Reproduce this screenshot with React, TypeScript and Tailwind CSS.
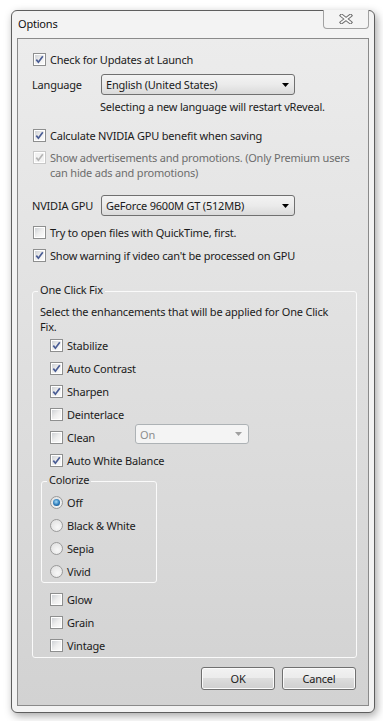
import React from "react";

function Check({ checked = false, disabled = false }: { checked?: boolean; disabled?: boolean }) {
  return (
    <span
      className={`relative flex h-[13px] w-[13px] shrink-0 items-center justify-center border bg-white ${
        disabled ? "border-[#c8c8c8]" : "border-[#8e8f8f]"
      }`}
    >
      <span
        className={`absolute inset-[1px] ${
          disabled
            ? "bg-[#f2f2f2]"
            : "bg-gradient-to-br from-[#cfd2d6] via-[#eeeeee] to-[#fbfbfb]"
        }`}
      />
      {checked && (
        <svg className="relative" width="9" height="9" viewBox="0 0 9 9">
          <path
            d="M1.3 4.6 L3.4 7.2 L7.8 1.2"
            fill="none"
            stroke={disabled ? "#b4b4b4" : "#4a5d95"}
            strokeWidth="1.7"
          />
        </svg>
      )}
    </span>
  );
}

function Radio({ on = false }: { on?: boolean }) {
  return (
    <span className="flex h-[13px] w-[13px] shrink-0 items-center justify-center rounded-full border border-[#9a9a9a] bg-[radial-gradient(circle_at_60%_65%,#f8f8f8,#dcdcdc)]">
      {on && (
        <span className="h-[7px] w-[7px] rounded-full bg-[radial-gradient(circle_at_45%_40%,#a7dcf8,#2a79b8_55%,#0f3d6c)]" />
      )}
    </span>
  );
}

function CheckRow({
  label,
  checked = false,
  disabled = false,
  className = "",
}: {
  label: string;
  checked?: boolean;
  disabled?: boolean;
  className?: string;
}) {
  return (
    <div className={`flex h-[16px] items-center gap-[4px] whitespace-nowrap ${className}`}>
      <Check checked={checked} disabled={disabled} />
      <span className={disabled ? "text-[#6d6d6d]" : ""}>{label}</span>
    </div>
  );
}

function RadioRow({ label, on = false, className = "" }: { label: string; on?: boolean; className?: string }) {
  return (
    <div className={`flex h-[16px] items-center gap-[4px] whitespace-nowrap ${className}`}>
      <Radio on={on} />
      <span>{label}</span>
    </div>
  );
}

function Arrow({ color = "#000" }: { color?: string }) {
  return (
    <svg width="7" height="4" viewBox="0 0 7 4">
      <path d="M0 0 H7 L3.5 4 Z" fill={color} />
    </svg>
  );
}

function Select({ value }: { value: string }) {
  return (
    <div className="flex h-[21px] w-[194px] items-center justify-between whitespace-nowrap rounded-[3px] border border-[#707070] bg-gradient-to-b from-[#f3f3f3] via-[#ebebeb] to-[#dadada] pl-[4px] pr-[5px]">
      <span>{value}</span>
      <Arrow />
    </div>
  );
}

function Button({ label }: { label: string }) {
  return (
    <div className="flex h-[23px] w-[74px] items-center justify-center rounded-[3px] border border-[#707070] bg-[linear-gradient(#f2f2f2,#ebebeb_50%,#dddddd_50%,#cfcfcf)] shadow-[inset_0_0_0_1px_#fbfbfb]">
      {label}
    </div>
  );
}

export default function App() {
  return (
    <div className="h-[721px] w-[383px] overflow-hidden bg-white pt-[10px] font-['Noto_Sans',sans-serif] text-[11px] leading-[15px] tracking-[-0.2px] text-[#1b1b1b]">
      <div className="ml-[11px] flex h-[703px] w-[364px] flex-col rounded-[6px] border border-[#5e5e5e] bg-[#f3f3f3] shadow-[2px_3px_9px_rgba(0,0,0,0.35)]">
        {/* Title bar */}
        <div className="flex h-[27px] shrink-0 items-start justify-between">
          <span className="ml-[6px] mt-[5px] text-[#111]">Options</span>
          <div className="mr-[5px] -mt-[1px] flex h-[19px] w-[46px] items-center justify-center rounded-b-[4px] border border-t-0 border-[#a2a2a2] bg-[#f4f4f4]">
            <svg width="14" height="10" viewBox="0 0 14 10">
              <path d="M2.5 1.5 L11.5 8.5 M11.5 1.5 L2.5 8.5" stroke="#6f6f6f" strokeWidth="3.6" strokeLinecap="square" fill="none" />
              <path d="M2.5 1.5 L11.5 8.5 M11.5 1.5 L2.5 8.5" stroke="#fbfbfb" strokeWidth="1.6" strokeLinecap="square" fill="none" />
            </svg>
          </div>
        </div>

        {/* Panel */}
        <div className="mx-[5px] mb-[6px] flex flex-1 flex-col border border-[#8a8a8a] bg-gradient-to-b from-[#ececec] to-[#d2d2d2] pl-[15px] pt-[12px]">
          <CheckRow label="Check for Updates at Launch" checked />

          <div className="mt-[7px] flex h-[21px] items-center whitespace-nowrap">
            <span className="-ml-[1px] w-[69px]">Language</span>
            <Select value="English (United States)" />
          </div>

          <div className="mt-[4px] h-[15px] whitespace-nowrap pl-[67px]">Selecting a new language will restart vReveal.</div>

          <CheckRow className="mt-[13px]" label="Calculate NVIDIA GPU benefit when saving" checked />

          <div className="mt-[7px] flex items-start gap-[4px] whitespace-nowrap">
            <span className="mt-[1px]">
              <Check checked disabled />
            </span>
            <span className="text-[#6d6d6d]">
              Show advertisements and promotions. (Only Premium users
              <br />
              can hide ads and promotions)
            </span>
          </div>

          <div className="mt-[15px] flex h-[21px] items-center whitespace-nowrap">
            <span className="-ml-[1px] w-[69px]">NVIDIA GPU</span>
            <Select value="GeForce 9600M GT (512MB)" />
          </div>

          <CheckRow className="mt-[8px]" label="Try to open files with QuickTime, first." />
          <CheckRow className="mt-[7px]" label="Show warning if video can't be processed on GPU" checked />

          {/* One Click Fix group */}
          <fieldset className="-ml-[1px] mt-[19px] w-[325px] rounded-[3px] border border-[#fafafa] px-0 pb-[4px]">
            <legend className="ml-[5px] px-[2px] pb-[3px]">One Click Fix</legend>
            <div className="pl-[7px] pt-[4px]">
              <div className="whitespace-nowrap">
                Select the enhancements that will be applied for One Click
                <br />
                Fix.
              </div>
              <div className="mt-[3px] flex flex-col gap-[7px] pl-[10px]">
                <CheckRow label="Stabilize" checked />
                <CheckRow label="Auto Contrast" checked />
                <CheckRow label="Sharpen" checked />
                <CheckRow label="Deinterlace" />
                <div className="flex h-[16px] items-center gap-[4px]">
                  <Check />
                  <span className="w-[64px]">Clean</span>
                  <div className="-mt-[5px] flex h-[20px] w-[114px] items-center justify-between self-start rounded-[3px] border border-[#adb2b5] bg-[#f4f4f4] pl-[4px] pr-[6px] text-[#8d8d8d]">
                    <span>On</span>
                    <Arrow color="#a0a0a0" />
                  </div>
                </div>
                <CheckRow label="Auto White Balance" checked />
              </div>

              <fieldset className="ml-[1px] mt-[4px] w-[116px] rounded-[3px] border border-[#fafafa] px-0 pb-[3px]">
                <legend className="ml-[5px] px-[2px] pb-[3px]">Colorize</legend>
                <div className="flex flex-col gap-[7px] pl-[8px] pt-[4px]">
                  <RadioRow label="Off" on />
                  <RadioRow label="Black & White" />
                  <RadioRow label="Sepia" />
                  <RadioRow label="Vivid" />
                </div>
              </fieldset>

              <div className="mt-[8px] flex flex-col gap-[7px] pl-[10px]">
                <CheckRow label="Glow" />
                <CheckRow label="Grain" />
                <CheckRow label="Vintage" />
              </div>
            </div>
          </fieldset>

          <div className="mr-[12px] mt-[9px] flex justify-end gap-[7px]">
            <Button label="OK" />
            <Button label="Cancel" />
          </div>
        </div>
      </div>
    </div>
  );
}
